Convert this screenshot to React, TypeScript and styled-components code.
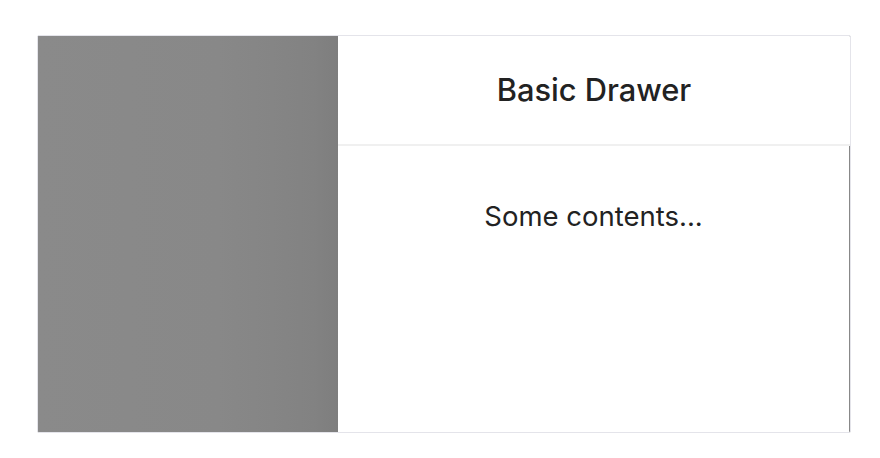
import React from "react";
import styled, { createGlobalStyle } from "styled-components";

const Global = createGlobalStyle`
  html, body { margin: 0; padding: 0; background: #ffffff; }
  body { font-family: Inter, "Liberation Sans", Arial, sans-serif; }
`;

const Page = styled.div`
  padding: 35px 0 0 37px;
`;

const Frame = styled.div`
  width: 812px;
  height: 396px;
  border: 1px solid #e4e4ea;
  border-radius: 2px;
  display: flex;
  overflow: hidden;
  background: #888888;
`;

const Mask = styled.div`
  flex: 1;
  background: linear-gradient(
    to right,
    #8a8a8a 0%,
    #888888 60%,
    #858585 78%,
    #828282 92%,
    #7e7e7e 100%
  );
`;

const Drawer = styled.div`
  width: 512px;
  display: flex;
  flex-direction: column;
`;

const Header = styled.div`
  background: #ffffff;
  padding: 32px 48px;
  border-bottom: 2px solid #f0f0f0;
  display: flex;
  justify-content: center;
`;

const Title = styled.div`
  font-size: 30.8px;
  line-height: 44px;
  font-weight: 500;
  color: #222222;
`;

const Body = styled.div`
  flex: 1;
  background: #ffffff;
  margin-right: 1px;
  padding: 48px;
  text-align: center;
  font-size: 27.5px;
  line-height: 44px;
  color: #222222;
`;

export default function App() {
  return (
    <>
      <Global />
      <Page>
        <Frame>
          <Mask />
          <Drawer>
            <Header>
              <Title>Basic Drawer</Title>
            </Header>
            <Body>Some contents...</Body>
          </Drawer>
        </Frame>
      </Page>
    </>
  );
}
